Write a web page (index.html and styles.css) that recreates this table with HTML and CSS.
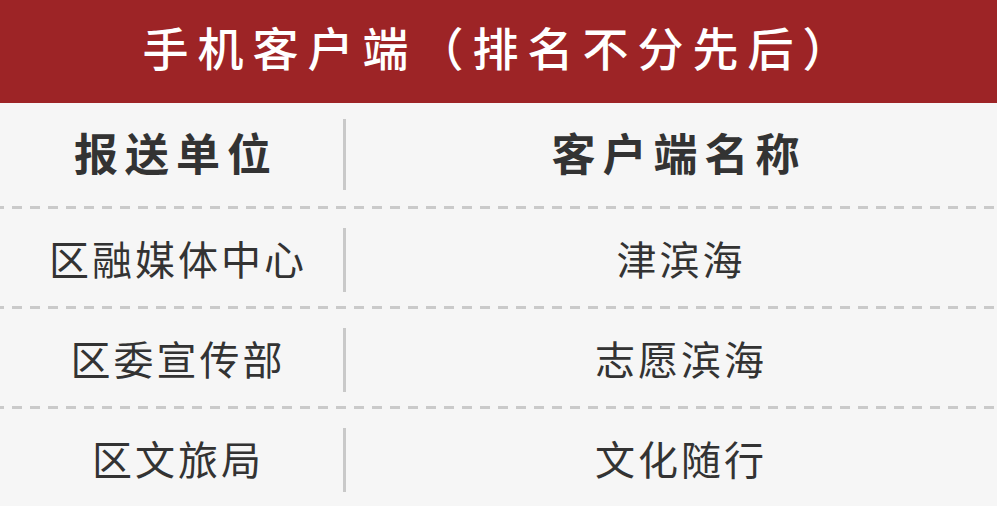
FILE: index.html
```html
<!DOCTYPE html>
<html lang="zh-CN">
<head>
<meta charset="utf-8">
<title>手机客户端</title>
<link rel="stylesheet" href="styles.css">
</head>
<body>
<div class="page">
  <div class="banner">手机客户端（排名不分先后）</div>
  <div class="table">
    <div class="row head">
      <div class="cell left">报送单位</div>
      <div class="divider"></div>
      <div class="cell right">客户端名称</div>
    </div>
    <div class="row">
      <div class="cell left">区融媒体中心</div>
      <div class="divider"></div>
      <div class="cell right">津滨海</div>
    </div>
    <div class="row">
      <div class="cell left">区委宣传部</div>
      <div class="divider"></div>
      <div class="cell right">志愿滨海</div>
    </div>
    <div class="row last">
      <div class="cell left">区文旅局</div>
      <div class="divider"></div>
      <div class="cell right">文化随行</div>
    </div>
  </div>
</div>
</body>
</html>
```

FILE: styles.css
```css
html, body {
  margin: 0;
  padding: 0;
  background: #f6f6f6;
}
body {
  width: 997px;
  height: 506px;
  overflow: hidden;
  font-family: "Noto Sans CJK SC", "Noto Sans", sans-serif;
  color: #333;
}
.banner {
  height: 103px;
  background: #9d2426;
  color: #fff;
  font-size: 46px;
  font-weight: 500;
  letter-spacing: 9px;
  text-indent: 9px;
  display: flex;
  align-items: center;
  justify-content: center;
  padding-bottom: 12px;
  padding-right: 6px;
  box-sizing: border-box;
}
.table {
  display: flex;
  flex-direction: column;
}
.row {
  display: grid;
  grid-template-columns: 343px 3px 1fr;
  height: 100px;
  box-sizing: border-box;
  padding-bottom: 3px;
  background-image: repeating-linear-gradient(90deg, #cacaca 0 4px, transparent 4px 12px, #cacaca 12px 18px);
  background-size: 100% 3px;
  background-position: 0 100%;
  background-repeat: no-repeat;
}
.row.head {
  height: 106px;
}
.row.last {
  background-image: none;
}
.cell {
  display: flex;
  align-items: center;
  justify-content: center;
  font-size: 40px;
  letter-spacing: 3px;
  text-indent: 3px;
}
.left {
  padding-left: 10px;
}
.right {
  padding-left: 16px;
}
.head .cell {
  font-size: 44px;
  font-weight: bold;
  letter-spacing: 7px;
  text-indent: 7px;
  padding-bottom: 6px;
}
.head .left {
  padding-right: 8px;
}
.head .right {
  padding-left: 8px;
}
.divider {
  background: #c9c9c9;
  margin: 19px 0 14px;
}
.head .divider {
  margin: 16px 0 16px;
}
```
